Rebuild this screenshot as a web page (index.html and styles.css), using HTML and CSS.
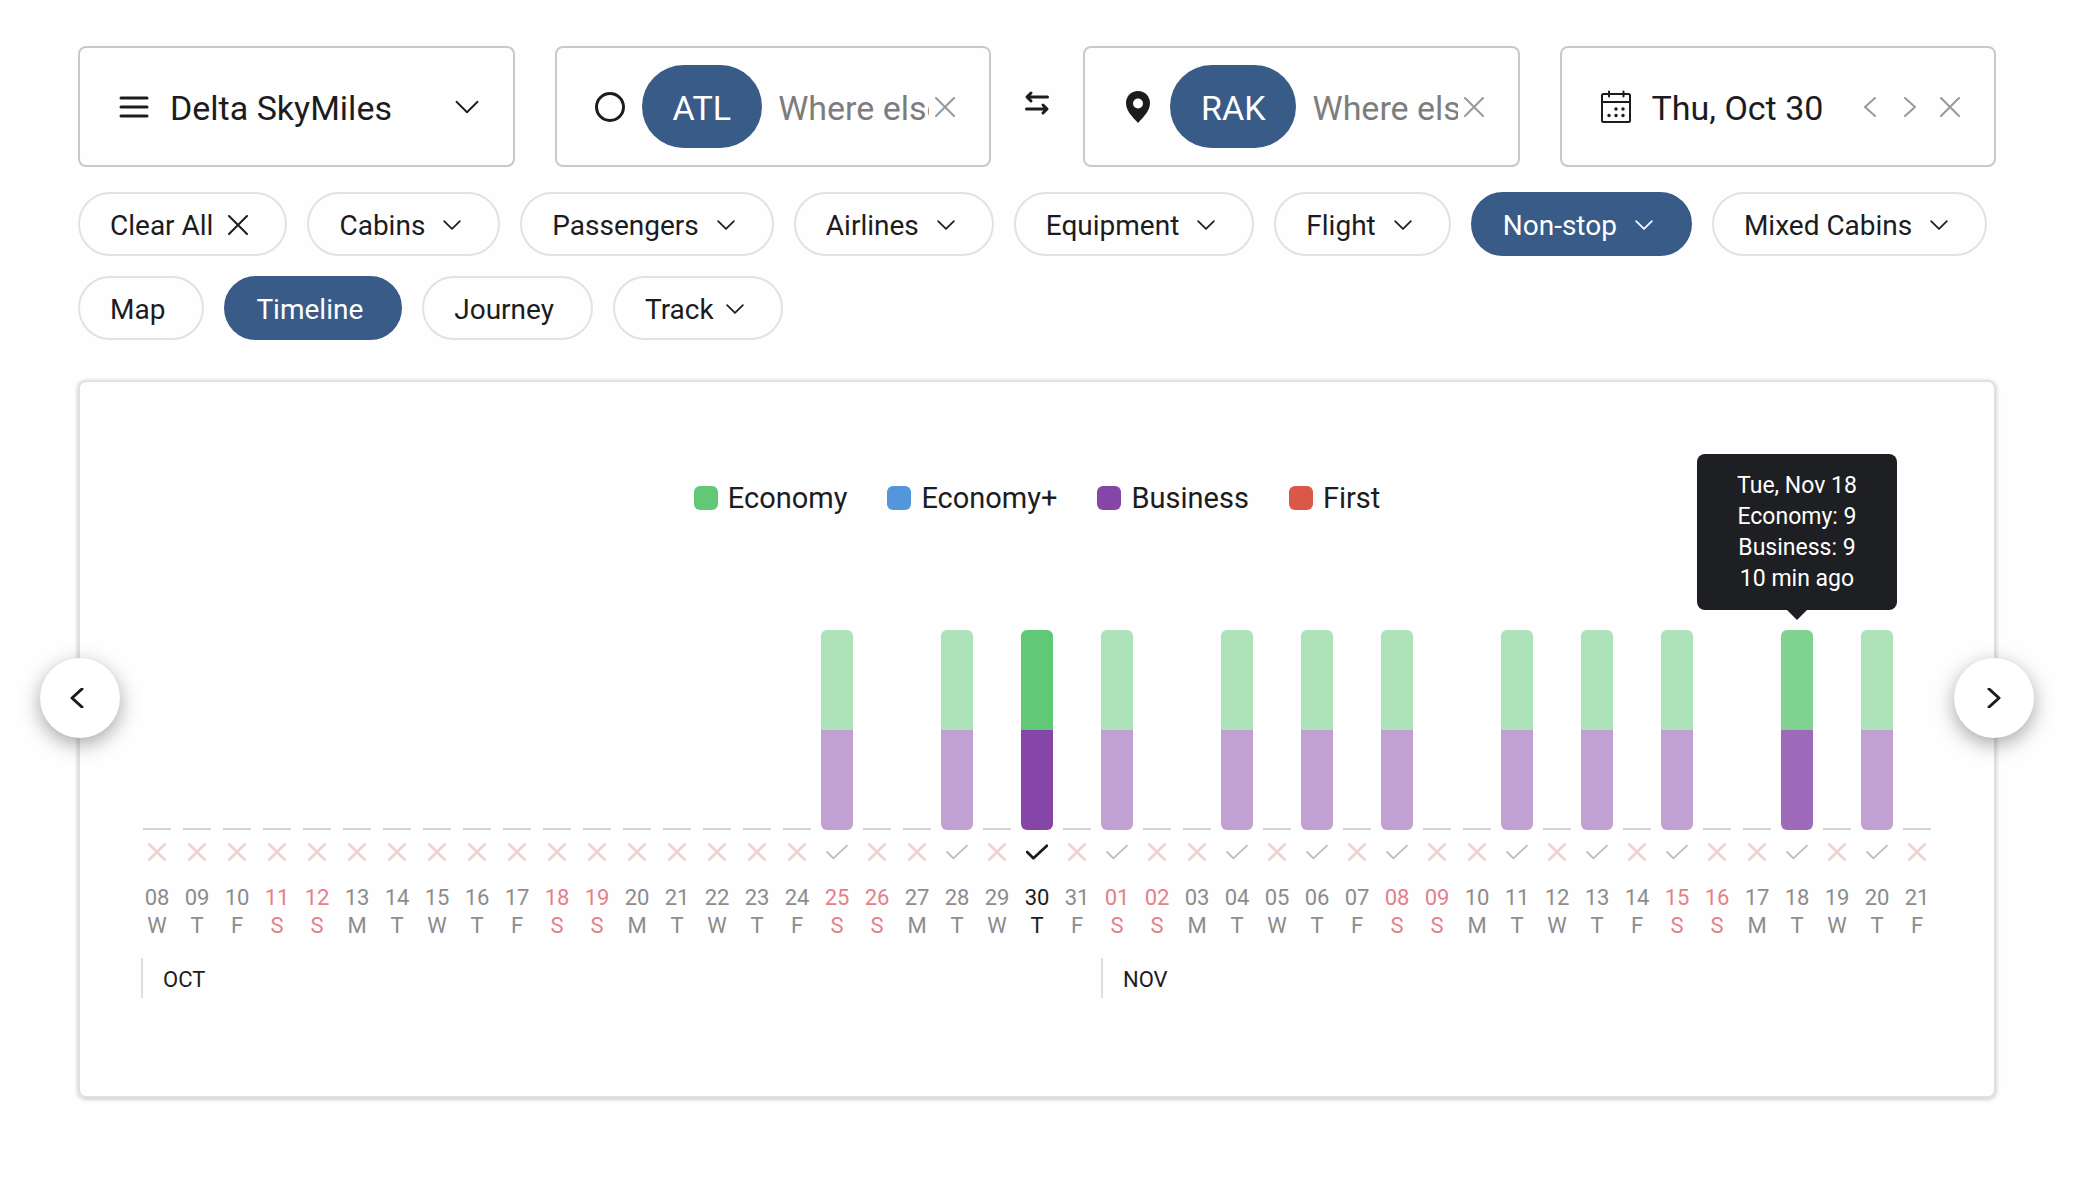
FILE: index.html
```html
<!DOCTYPE html>
<html lang="en">

<head>
    <meta charset="UTF-8">
    <meta name="viewport" content="width=device-width, initial-scale=1.0">
    <title>Award Timeline - ATL to RAK</title>
    <link rel="stylesheet" href="styles.css">
</head>

<body>
    <!-- Shared icons -->
    <svg class="icon-defs" aria-hidden="true">
        <symbol id="chevron" viewBox="0 0 16 16">
            <path d="M1 4.5l7 7 7-7" />
        </symbol>
        <symbol id="left" viewBox="0 0 20 20">
            <path d="M15 1L5 10l10 9" />
        </symbol>
        <symbol id="right" viewBox="0 0 20 20">
            <path d="M5 1l10 9-10 9" />
        </symbol>
        <symbol id="cross" viewBox="0 0 20 20">
            <path d="M1 1l18 18M19 1L1 19" />
        </symbol>
        <symbol id="check" viewBox="0 0 24 20">
            <path d="M1 10l7 7L23 3" />
        </symbol>
    </svg>

    <main class="page">
        <form class="search" id="searchForm">
            <div class="field">
                <label for="program">
                    <svg class="icon icon-menu" viewBox="0 0 28 24" role="img" aria-label="Program">
                        <path d="M1 3h26M1 12h26M1 21h26" />
                    </svg>
                </label>
                <select id="program" name="program">
                    <option>Delta SkyMiles</option>
                </select>
                <svg class="icon icon-select"><use href="#chevron" /></svg>
            </div>

            <div class="field">
                <label for="origin">
                    <svg class="icon icon-origin" viewBox="0 0 30 30" role="img" aria-label="Origin">
                        <circle cx="15" cy="15" r="13.5" />
                    </svg>
                </label>
                <button type="button" class="airport">ATL</button>
                <input type="text" id="origin" name="origin" placeholder="Where else?">
                <button type="button" class="icon-button" aria-label="Clear origin">
                    <svg class="icon icon-tool"><use href="#cross" /></svg>
                </button>
            </div>

            <button type="button" class="swap" aria-label="Swap airports">
                <svg class="icon icon-swap" viewBox="0 0 24 24">
                    <path d="M22.500 6H2M6 2L2 6l4 4M1.500 18H22M18 14l4 4-4 4" />
                </svg>
            </button>

            <div class="field">
                <label for="destination">
                    <svg class="icon icon-pin" viewBox="0 0 30 32" role="img" aria-label="Destination">
                        <path fill-rule="evenodd"
                            d="M15 0C8 0 3 5.500 3 12c0 7.500 6 13.500 12 20 6-6.500 12-12.500 12-20C27 5.500 22 0 15 0zm0 7.500a5 5 0 1 1 0 10 5 5 0 0 1 0-10z" />
                    </svg>
                </label>
                <button type="button" class="airport">RAK</button>
                <input type="text" id="destination" name="destination" placeholder="Where else?">
                <button type="button" class="icon-button" aria-label="Clear destination">
                    <svg class="icon icon-tool"><use href="#cross" /></svg>
                </button>
            </div>

            <div class="field">
                <label for="date">
                    <svg class="icon icon-calendar" viewBox="0 0 32 34" role="img" aria-label="Date">
                        <rect x="2" y="4" width="28" height="28" rx="1.5" />
                        <path d="M2 12h28M9 1.500v5M23.500 1.500v5" />
                        <path class="dots" d="M16 19h.01M23 19h.01M9 25.500h.01M16 25.500h.01M23 25.500h.01" />
                    </svg>
                </label>
                <input type="text" id="date" name="date" value="Thu, Oct 30">
                <div class="date-tools">
                    <button type="button" class="icon-button" aria-label="Previous day">
                        <svg class="icon icon-tool"><use href="#left" /></svg>
                    </button>
                    <button type="button" class="icon-button" aria-label="Next day">
                        <svg class="icon icon-tool"><use href="#right" /></svg>
                    </button>
                    <button type="button" class="icon-button" aria-label="Clear date">
                        <svg class="icon icon-tool"><use href="#cross" /></svg>
                    </button>
                </div>
            </div>
        </form>

        <div class="filters">
            <button class="chip chip-clear">Clear All <svg class="icon"><use href="#cross" /></svg></button>
            <button class="chip">Cabins <svg class="icon"><use href="#chevron" /></svg></button>
            <button class="chip">Passengers <svg class="icon"><use href="#chevron" /></svg></button>
            <button class="chip">Airlines <svg class="icon"><use href="#chevron" /></svg></button>
            <button class="chip">Equipment <svg class="icon"><use href="#chevron" /></svg></button>
            <button class="chip">Flight <svg class="icon"><use href="#chevron" /></svg></button>
            <button class="chip active">Non-stop <svg class="icon"><use href="#chevron" /></svg></button>
            <button class="chip">Mixed Cabins <svg class="icon"><use href="#chevron" /></svg></button>
        </div>
        <div class="filters views">
            <button class="chip">Map</button>
            <button class="chip active">Timeline</button>
            <button class="chip">Journey</button>
            <button class="chip chip-track">Track <svg class="icon"><use href="#chevron" /></svg></button>
        </div>

        <section class="card">
            <ul class="legend">
                <li><span class="swatch economy"></span>Economy</li>
                <li><span class="swatch economy-plus"></span>Economy+</li>
                <li><span class="swatch business"></span>Business</li>
                <li><span class="swatch first"></span>First</li>
            </ul>

            <div class="timeline" id="timeline"></div>

            <div class="months">
                <div class="month oct">OCT</div>
                <div class="month nov">NOV</div>
            </div>

            <button class="slide slide-prev" aria-label="Earlier dates">
                <svg class="icon"><use href="#left" /></svg>
            </button>
            <button class="slide slide-next" aria-label="Later dates">
                <svg class="icon"><use href="#right" /></svg>
            </button>
        </section>
    </main>

    <script>
        const timeline = document.getElementById('timeline');
        const letters = ['S', 'M', 'T', 'W', 'T', 'F', 'S'];

        // Days that have non-stop seats, as month-day
        const available = ['10-25', '10-28', '10-30', '11-1', '11-4', '11-6', '11-8',
            '11-11', '11-13', '11-15', '11-18', '11-20'];
        const selected = '10-30';
        const hovered = '11-18';

        for (let i = 0; i < 45; i++) {
            const date = new Date(2025, 9, 8 + i);
            const key = `${date.getMonth() + 1}-${date.getDate()}`;
            const open = available.includes(key);
            const weekend = date.getDay() === 0 || date.getDay() === 6;

            const day = document.createElement('button');
            day.className = 'day';
            if (weekend) day.classList.add('weekend');
            if (key === selected) day.classList.add('selected');
            if (key === hovered) day.classList.add('hovered');

            day.innerHTML = `
                <span class="plot">${open
                    ? '<span class="bar"><span class="economy"></span><span class="business"></span></span>'
                    : '<span class="empty"></span>'}</span>
                <svg class="icon mark ${open ? 'yes' : 'no'}"><use href="#${open ? 'check' : 'cross'}" /></svg>
                <span class="number">${String(date.getDate()).padStart(2, '0')}</span>
                <span class="letter">${letters[date.getDay()]}</span>`;

            if (key === hovered) {
                day.insertAdjacentHTML('beforeend',
                    '<span class="tooltip">Tue, Nov 18<br>Economy: 9<br>Business: 9<br>10 min ago</span>');
            }
            timeline.appendChild(day);
        }
    </script>
</body>

</html>
```
FILE: styles.css
```css
:root {
    --primary-color: #395b87;
    --text-color: #1c1c1e;
    --muted-color: #8c8c8c;
    --border-color: #c9c9c9;
    --light-border: #e2e2e2;
    --economy: #61c877;
    --economy-plus: #5396dc;
    --business: #8646a8;
    --first: #d95847;
}

* {
    box-sizing: border-box;
    margin: 0;
    padding: 0;
}

body {
    font-family: Roboto, sans-serif;
    background-color: #fefefe;
    color: var(--text-color);
}

button,
input,
select {
    font: inherit;
    color: inherit;
    background: none;
    border: none;
    outline: none;
}

button {
    cursor: pointer;
}

.icon-defs {
    position: absolute;
    width: 0;
    height: 0;
}

.icon {
    flex: none;
    width: 20px;
    height: 20px;
    fill: none;
    stroke: currentColor;
    stroke-width: 2;
    stroke-linecap: round;
    stroke-linejoin: round;
    overflow: visible;
}

.page {
    padding: 46px 88px 80px 78px;
}

/* Search row */
.search {
    display: grid;
    grid-template-columns: 1fr 1fr 12px 1fr 1fr;
    gap: 40px;
    font-size: 34px;
}

.field {
    display: flex;
    align-items: center;
    height: 121px;
    min-width: 0;
    padding: 0 34px 0 38px;
    border: 2px solid var(--border-color);
    border-radius: 8px;
}

.field label {
    display: flex;
}

.field input,
.field select {
    flex: 1;
    min-width: 0;
    width: 0;
    height: 60px;
    padding-top: 2px;
    appearance: none;
}

.field input::placeholder {
    color: #7d7d7d;
    opacity: 1;
}

.icon-menu {
    width: 28px;
    height: 24px;
    stroke-width: 3;
    margin: 0 22px 0 2px;
}

.icon-select {
    width: 24px;
    height: 24px;
    stroke-width: 1.2;
}

.icon-origin {
    width: 30px;
    height: 30px;
    stroke-width: 3;
}

.icon-pin {
    width: 30px;
    height: 32px;
    fill: currentColor;
    stroke: none;
}

.icon-calendar {
    width: 32px;
    height: 34px;
    margin-right: 20px;
}

.icon-calendar .dots {
    stroke-width: 3.5;
}

.airport {
    height: 83px;
    padding: 2px 31px 0;
    margin: 0 16px 0 17px;
    border-radius: 42px;
    background-color: var(--primary-color);
    color: white;
}

.icon-button {
    display: flex;
    margin-left: 6px;
    color: #999999;
}

.date-tools {
    display: flex;
    gap: 14px;
}

.swap {
    display: flex;
    align-items: center;
    justify-content: center;
    padding-bottom: 8px;
}

.icon-swap {
    width: 24px;
    height: 24px;
    stroke-width: 3;
}

/* Filter chips */
.filters {
    display: flex;
    flex-wrap: wrap;
    gap: 20px;
    margin-top: 25px;
}

.views {
    margin-top: 20px;
}

.chip {
    display: flex;
    align-items: center;
    gap: 18px;
    height: 64px;
    padding: 2px 37px 0 30px;
    border: 2px solid var(--light-border);
    border-radius: 32px;
    font-size: 28px;
}

.chip .icon {
    width: 18px;
    height: 18px;
    stroke-width: 1.5;
}

.chip-clear {
    gap: 15px;
}

.chip-clear .icon {
    width: 20px;
    height: 20px;
    stroke-width: 2;
}

.chip-track {
    gap: 12px;
}

.chip.active {
    background-color: var(--primary-color);
    border-color: var(--primary-color);
    color: white;
}

/* Timeline card */
.card {
    position: relative;
    margin-top: 40px;
    padding: 100px 57px 98px;
    border: 2px solid #e0e0e0;
    border-radius: 8px;
    box-shadow: 0 1px 4px rgba(0, 0, 0, 0.25);
}

.legend {
    display: flex;
    justify-content: center;
    gap: 40px;
    list-style: none;
    font-size: 29px;
    line-height: 32px;
}

.legend li {
    display: flex;
    align-items: center;
    gap: 10px;
}

.swatch {
    width: 24px;
    height: 24px;
    border-radius: 6px;
}

.economy {
    background-color: var(--economy);
}

.economy-plus {
    background-color: var(--economy-plus);
}

.business {
    background-color: var(--business);
}

.first {
    background-color: var(--first);
}

.timeline {
    display: grid;
    grid-template-columns: repeat(45, 1fr);
    margin-top: 116px;
}

.day {
    position: relative;
    display: flex;
    flex-direction: column;
    align-items: center;
    font-size: 22px;
    line-height: 28px;
    color: var(--muted-color);
}

.weekend {
    color: #e5808a;
}

.selected {
    color: var(--text-color);
}

.plot {
    display: flex;
    align-items: flex-end;
    height: 200px;
    margin-bottom: 13px;
}

.bar {
    display: flex;
    flex-direction: column;
    width: 32px;
    height: 200px;
    border-radius: 6px;
    overflow: hidden;
    opacity: 0.5;
}

.bar span {
    flex: 1;
}

.selected .bar {
    opacity: 1;
}

.hovered .bar {
    opacity: 0.8;
}

.empty {
    width: 28px;
    height: 2px;
    background-color: #d4d4d4;
}

.mark {
    width: 18px;
    height: 18px;
    margin-bottom: 23px;
}

.mark.no {
    color: #f0d2d0;
    stroke-width: 3;
}

.mark.yes {
    width: 22px;
    color: #bdbdbd;
}

.selected .mark.yes {
    color: var(--text-color);
    stroke-width: 3;
}

.tooltip {
    position: absolute;
    bottom: 100%;
    left: 50%;
    width: 200px;
    margin: 0 0 20px -100px;
    padding: 16px 0;
    border-radius: 8px;
    background-color: #1e1f23;
    color: white;
    font-size: 23px;
    line-height: 31px;
}

.tooltip::after {
    content: "";
    position: absolute;
    top: 100%;
    left: 50%;
    margin-left: -10px;
    border: 10px solid transparent;
    border-top-color: #1e1f23;
    border-bottom: none;
}

.months {
    display: grid;
    grid-template-columns: repeat(45, 1fr);
    margin-top: 18px;
    font-size: 22px;
    line-height: 40px;
}

.month {
    height: 40px;
    margin-left: 4px;
    padding: 2px 0 0 20px;
    border-left: 2px solid #dddddd;
}

.oct {
    grid-column: 1 / span 24;
}

.nov {
    grid-column: 25 / span 21;
}

.slide {
    position: absolute;
    top: 276px;
    display: flex;
    align-items: center;
    justify-content: center;
    width: 80px;
    height: 80px;
    border-radius: 50%;
    background-color: white;
    box-shadow: 0 6px 20px rgba(0, 0, 0, 0.35);
}

.slide .icon {
    stroke-width: 3;
}

.slide-prev {
    left: -40px;
    padding-right: 6px;
}

.slide-next {
    right: -40px;
}
```
